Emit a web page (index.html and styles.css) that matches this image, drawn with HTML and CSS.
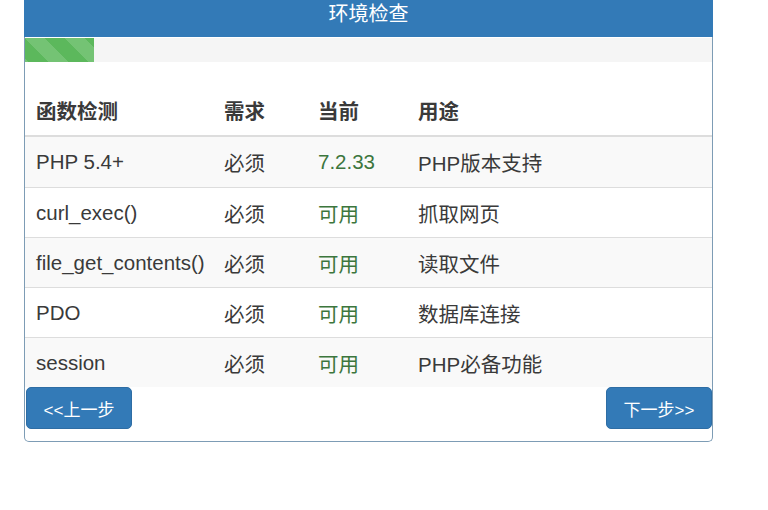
FILE: index.html
```html
<!DOCTYPE html>
<html lang="zh-CN">
<head>
<meta charset="utf-8">
<title>环境检查</title>
<link rel="stylesheet" href="styles.css">
</head>
<body>
<div class="panel">
  <div class="panel-heading">环境检查</div>
  <div class="progress"><div class="progress-bar" style="width:69px"></div></div>
  <table class="check-table">
    <colgroup>
      <col class="c1"><col class="c2"><col class="c3"><col class="c4">
    </colgroup>
    <thead>
      <tr><th>函数检测</th><th>需求</th><th>当前</th><th>用途</th></tr>
    </thead>
    <tbody>
      <tr><td>PHP 5.4+</td><td>必须</td><td class="ok">7.2.33</td><td>PHP版本支持</td></tr>
      <tr><td>curl_exec()</td><td>必须</td><td class="ok">可用</td><td>抓取网页</td></tr>
      <tr><td>file_get_contents()</td><td>必须</td><td class="ok">可用</td><td>读取文件</td></tr>
      <tr><td>PDO</td><td>必须</td><td class="ok">可用</td><td>数据库连接</td></tr>
      <tr><td>session</td><td>必须</td><td class="ok">可用</td><td>PHP必备功能</td></tr>
    </tbody>
  </table>
  <div class="actions">
    <a class="btn">&lt;&lt;上一步</a>
    <a class="btn">下一步&gt;&gt;</a>
  </div>
</div>
</body>
</html>
```

FILE: styles.css
```css
html, body {
  margin: 0;
  padding: 0;
  background: #fff;
}
body {
  font-family: "Liberation Sans", "Noto Sans CJK SC", sans-serif;
  color: #3a3a3a;
}
.panel {
  margin-left: 24px;
  width: 689px;
  box-sizing: border-box;
  border: 1px solid #7d9cb5;
  border-top: none;
  border-radius: 0 0 5px 5px;
  padding-bottom: 12px;
}
.panel-heading {
  margin: 0 -1px;
  height: 37px;
  line-height: 29px;
  background: #337ab7;
  color: #fff;
  text-align: center;
  font-size: 20px;
}
.progress {
  margin-top: 1px;
  height: 24px;
  background: #f5f5f5;
}
.progress-bar {
  height: 100%;
  background-color: #5cb85c;
  background-image: linear-gradient(45deg, rgba(255,255,255,.15) 25%, transparent 25%, transparent 50%, rgba(255,255,255,.15) 50%, rgba(255,255,255,.15) 75%, transparent 75%, transparent);
  background-size: 40px 40px;
}
.check-table {
  margin-top: 23px;
  width: 100%;
  border-collapse: collapse;
  table-layout: fixed;
  font-size: 20.5px;
}
.c1 { width: 188px; }
.c2 { width: 94px; }
.c3 { width: 100px; }
.check-table th {
  text-align: left;
  font-weight: bold;
  height: 50px;
  padding: 0 0 0 11px;
  border-bottom: 2px solid #ddd;
  vertical-align: middle;
}
.check-table td {
  height: 49px;
  padding: 0 0 0 11px;
  border-top: 1px solid #ddd;
  vertical-align: middle;
  white-space: nowrap;
}
.check-table thead + tbody tr:first-child td {
  border-top: none;
  height: 50px;
}
.check-table tbody tr:nth-child(odd) {
  background: #f9f9f9;
}
.ok {
  color: #3c763d;
}
.actions {
  display: flex;
  justify-content: space-between;
  padding-left: 1px;
}
.btn {
  display: flex;
  align-items: center;
  justify-content: center;
  width: 106px;
  height: 42px;
  background: #337ab7;
  border: 1px solid #2e6da4;
  box-sizing: border-box;
  border-radius: 5px;
  color: #fff;
  font-size: 17px;
  text-decoration: none;
}
```
